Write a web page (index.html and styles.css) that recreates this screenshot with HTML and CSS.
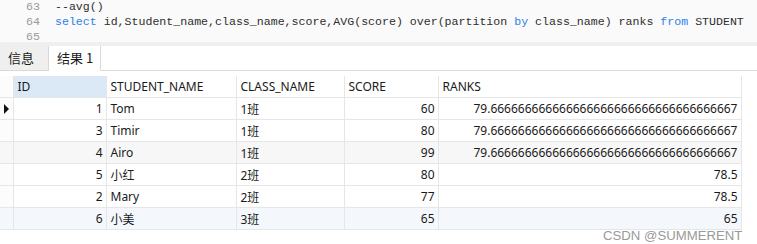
FILE: index.html
```html
<!DOCTYPE html>
<html lang="en">
<head>
    <meta charset="UTF-8">
    <title>Query Result</title>
    <link rel="stylesheet" href="styles.css">
</head>
<body>
    <div class="editor">
        <div class="line"><span class="num">63</span><span class="code">--avg()</span></div>
        <div class="line"><span class="num">64</span><span class="code"><span class="kw">select</span> id,Student_name,class_name,score,AVG(score) over(partition <span class="kw">by</span> class_name) ranks <span class="kw">from</span> STUDENT</span></div>
        <div class="line"><span class="num">65</span><span class="code"></span></div>
    </div>
    <div class="split"></div>

    <div class="tabs">
        <div class="tab">信息</div>
        <div class="tab active">结果 1</div>
        <div class="tab-rest"></div>
    </div>

    <div class="result">
        <table class="grid">
            <colgroup>
                <col class="c-ind"><col class="c-id"><col class="c-name"><col class="c-class"><col class="c-score"><col class="c-ranks">
            </colgroup>
            <thead>
                <tr>
                    <th class="ind"></th>
                    <th class="sel">ID</th>
                    <th>STUDENT_NAME</th>
                    <th>CLASS_NAME</th>
                    <th>SCORE</th>
                    <th>RANKS</th>
                </tr>
            </thead>
            <tbody>
                <tr>
                    <td class="ind"><span class="arrow"></span></td>
                    <td class="n">1</td><td>Tom</td><td>1班</td><td class="n">60</td><td class="n">79.666666666666666666666666666666666667</td>
                </tr>
                <tr>
                    <td class="ind"></td>
                    <td class="n">3</td><td>Timir</td><td>1班</td><td class="n">80</td><td class="n">79.666666666666666666666666666666666667</td>
                </tr>
                <tr class="hover">
                    <td class="ind"></td>
                    <td class="n">4</td><td>Airo</td><td>1班</td><td class="n">99</td><td class="n">79.666666666666666666666666666666666667</td>
                </tr>
                <tr>
                    <td class="ind"></td>
                    <td class="n">5</td><td>小红</td><td>2班</td><td class="n">80</td><td class="n">78.5</td>
                </tr>
                <tr>
                    <td class="ind"></td>
                    <td class="n">2</td><td>Mary</td><td>2班</td><td class="n">77</td><td class="n">78.5</td>
                </tr>
                <tr class="last">
                    <td class="ind"></td>
                    <td class="n">6</td><td>小美</td><td>3班</td><td class="n">65</td><td class="n">65</td>
                </tr>
            </tbody>
        </table>
        <div class="mark">CSDN @SUMMERENT</div>
    </div>
</body>
</html>
```

FILE: styles.css
```css
body {
    margin: 0;
    background: #fff;
    font-family: "Noto Sans", "Noto Sans CJK SC", sans-serif;
    color: #1a1a1a;
    width: 757px;
    height: 244px;
    overflow: hidden;
}
.editor {
    background: #fafafa;
    height: 42px;
}
.line {
    display: flex;
    height: 15px;
    line-height: 13px;
    font-family: "Liberation Mono", monospace;
    font-size: 11.6px;
}
.num {
    width: 40px;
    text-align: right;
    color: #999;
}
.code {
    margin-left: 15px;
    color: #2e2e2e;
    white-space: pre;
}
.kw {
    color: #2b82e8;
}
.split {
    height: 4px;
    background: #efefef;
}
.tabs {
    display: flex;
    height: 25px;
    font-size: 13px;
    font-family: "Noto Sans CJK SC", sans-serif;
}
.tab {
    width: 49px;
    background: #efefef;
    border-right: 1px solid #d9d9d9;
    border-bottom: 1px solid #d9d9d9;
    line-height: 24px;
    padding-left: 8px;
    box-sizing: border-box;
}
.tab.active {
    width: 52px;
    background: #fff;
    border-bottom-color: #fff;
}
.tab-rest {
    flex: 1;
    border-bottom: 1px solid #d9d9d9;
}
.result {
    position: relative;
    padding-top: 5px;
}
.grid {
    border-collapse: collapse;
    table-layout: fixed;
    width: 741px;
    font-size: 12px;
}
.c-ind { width: 13px; }
.c-id { width: 93px; }
.c-name { width: 130px; }
.c-class { width: 108px; }
.c-score { width: 94px; }
.c-ranks { width: 303px; }
.grid th, .grid td {
    height: 21px;
    padding: 0 4px;
    border: 1px solid #e6e6e6;
    text-align: left;
    font-weight: normal;
    white-space: nowrap;
}
.grid th {
    border-top: none;
}
.grid th.sel {
    background: #dbe9f6;
}
.grid .n {
    text-align: right;
    padding-right: 3px;
}
.grid .ind {
    padding: 0;
    border-left: none;
    background: #fcfcfc;
}
.grid tr.hover td {
    background: #f7f7f7;
}
.grid tr.last td {
    background: #f4f8fc;
}
.arrow {
    display: block;
    width: 0;
    height: 0;
    margin-left: 4px;
    border-top: 5px solid transparent;
    border-bottom: 5px solid transparent;
    border-left: 5px solid #111;
}
.mark {
    position: absolute;
    left: 603px;
    top: 157px;
    font-family: "Liberation Sans", Arial, sans-serif;
    font-size: 13.2px;
    line-height: 15px;
    white-space: nowrap;
    color: #9a9a9a;
}
```
